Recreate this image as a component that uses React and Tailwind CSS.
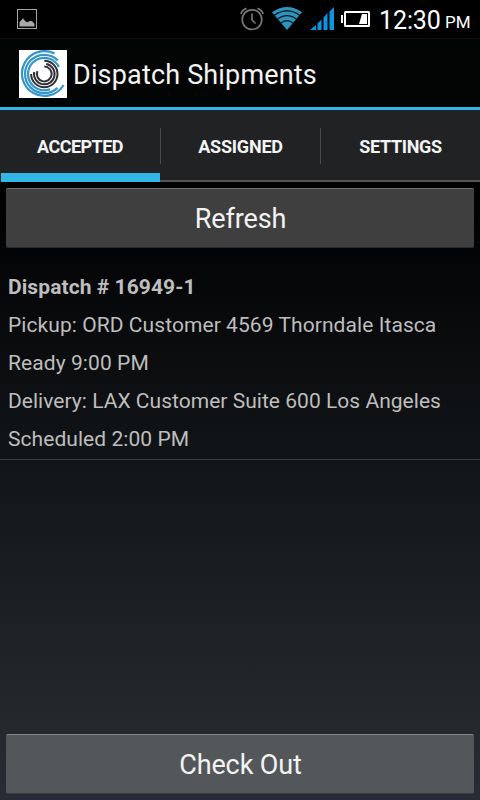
const tabs = [
  { id: 'accepted', label: 'ACCEPTED', tracking: 'tracking-[-0.55px]' },
  { id: 'assigned', label: 'ASSIGNED', tracking: 'tracking-[-0.2px]' },
  { id: 'settings', label: 'SETTINGS', tracking: 'tracking-[-0.35px]' },
]

const lines = [
  { text: 'Pickup: ORD Customer 4569 Thorndale Itasca', tracking: 'tracking-[0.07px]' },
  { text: 'Ready 9:00 PM', tracking: 'tracking-[0.08px]' },
  { text: 'Delivery: LAX Customer Suite 600 Los Angeles', tracking: 'tracking-[0.03px]' },
  { text: 'Scheduled 2:00 PM', tracking: 'tracking-[0.06px]' },
]

function PictureIcon() {
  return (
    <svg width="20" height="20" viewBox="0 0 20 20">
      <rect x="0.5" y="0.5" width="19" height="19" fill="none" stroke="#a3a3a3" />
      <path d="M2.5 17.5V13L4 11.5l2-2.3 2.3 3 1.7 1 3-1.2h1.5l2 1.5 1 1.5v2.5z" fill="#a8a8a8" />
    </svg>
  )
}

function AlarmIcon() {
  return (
    <svg width="24" height="24" viewBox="0 0 24 24" fill="none" stroke="#767676" strokeWidth="1.7">
      <circle cx="12" cy="12.6" r="9.8" />
      <path d="M12 6.5v6.5l3.5 3.5M0.8 7Q2 3 6.6 1.2M23.2 7Q22 3 17.4 1.2" />
    </svg>
  )
}

function WifiIcon() {
  return (
    <svg width="30" height="23" viewBox="0 0 30 23">
      <path d="M0 5.2Q15-5.2 30 5.2L15 23z" fill="#2e93bd" />
      <g fill="none" stroke="#05141b" strokeWidth="1.2">
        <path d="M2 8.4Q15-0.6 28 8.4" />
        <path d="M5 12.6Q15 4.8 25 12.6" />
        <path d="M8.4 16.4Q15 11 21.6 16.4" />
      </g>
    </svg>
  )
}

function SignalIcon() {
  return (
    <svg width="24" height="23" viewBox="0 0 24 23" fill="#0a97e0">
      <path d="M0 23 6 18V23zM7.5 16.5 11.5 12.5V23H7.5zM13.5 10.5 17.5 6V23H13.5zM19.5 4.5 24 0V23H19.5z" />
    </svg>
  )
}

function BatteryIcon() {
  return (
    <svg width="29" height="16" viewBox="0 0 29 16">
      <path d="M0 4h2v8H0z" fill="#fff" />
      <rect x="4" y="1" width="24" height="14" rx="0.5" fill="none" stroke="#fff" strokeWidth="2" />
      <path d="M21 3h5v10h-8z" fill="#fff" />
    </svg>
  )
}

function Logo() {
  return (
    <svg className="bg-white" width="48" height="48" viewBox="0 0 48 48" fill="none">
      <g stroke="#3796c8" strokeWidth="2.2">
        <path d="M35.6 3.6A22.4 22.4 0 1 0 44.6 35" />
        <path d="M38.8 10.4A19.2 19.2 0 1 0 38.5 37.9" />
        <path d="M39.8 17A16.2 16.2 0 1 0 31 39.2" />
      </g>
      <g stroke="#303136" strokeWidth="2">
        <path d="M25.3 10.8A13.2 13.2 0 1 1 12.1 24" />
        <path d="M27.2 13.9A10.3 10.3 0 1 1 15.2 22" />
        <path d="M25.3 16.6A7.4 7.4 0 1 1 18.4 21.2" />
      </g>
    </svg>
  )
}

function StatusBar() {
  return (
    <div className="flex h-[39px] items-center border-b border-[#101010] bg-black pl-[17px] pr-[11px]">
      <PictureIcon />
      <div className="ml-auto flex items-center">
        <AlarmIcon />
        <span className="ml-2 flex pb-px"><WifiIcon /></span>
        <span className="ml-2 flex pb-px"><SignalIcon /></span>
        <span className="ml-[7px] flex"><BatteryIcon /></span>
        <span className="ml-[9px] w-[61px] whitespace-nowrap pt-[3px] text-[25px] leading-[35px] tracking-[-0.1px] text-white">12:30</span>
        <span className="ml-[5px] w-[24px] whitespace-nowrap pt-[7px] text-[17px] leading-[31px] text-white">PM</span>
      </div>
    </div>
  )
}

function HoloButton({ children, className }) {
  return (
    <button
      className={`mx-[6px] h-[60px] rounded-[2px] border-t border-b pt-[3px] pl-px text-[27px] tracking-[-0.1px] text-[#f3f3f3] ${className}`}
    >
      {children}
    </button>
  )
}

export default function App() {
  return (
    <div className="flex h-[800px] w-[480px] flex-col overflow-hidden bg-[linear-gradient(to_bottom,#000_180px,#040506_260px,#121518_460px,#24292d_730px,#282b36_800px)] font-['Roboto',sans-serif]">
      <StatusBar />

      <header className="flex h-[71px] items-center border-b-3 border-[#33b5e5] bg-[#030505] pt-[2px] pl-[19px]">
        <Logo />
        <h1 className="ml-[6px] pt-[2px] text-[27px] tracking-[0.17px] text-[#f3f3f3]">Dispatch Shipments</h1>
      </header>

      <nav className="flex h-[72px] bg-[#212224]">
        {tabs.map((tab, i) => (
          <div
            key={tab.id}
            className={`relative flex w-40 items-center justify-center text-[18px] font-bold text-[#f3f3f3] ${tab.tracking} ${
              i === 0 ? 'pt-px' : 'border-b-2 border-[#555] pt-[3px] pl-px'
            }`}
          >
            {tab.label}
            {i === 0 && <span className="absolute bottom-0 left-px right-0 h-[9px] bg-[#33b5e5]" />}
            {i > 0 && <span className="absolute left-0 top-[18px] h-9 w-px bg-[#4a4a4c]" />}
          </div>
        ))}
      </nav>

      <HoloButton className="mt-[6px] border-t-[#6f6f6f] border-b-[#2b2b2b] bg-[#3f3f3f]">Refresh</HoloButton>

      <section className="mt-[20px] h-[192px] border-b border-[#3a3b3d] pl-2 text-[21px] leading-[38px] text-[#bebebe]">
        <p className="font-bold tracking-[0.08px]">Dispatch # 16949-1</p>
        {lines.map((line) => (
          <p key={line.text} className={`whitespace-nowrap ${line.tracking}`}>{line.text}</p>
        ))}
      </section>

      <HoloButton className="mt-auto mb-[6px] border-t-[#868889] border-b-[#3b3d40] bg-[#54575a]">Check Out</HoloButton>
    </div>
  )
}
